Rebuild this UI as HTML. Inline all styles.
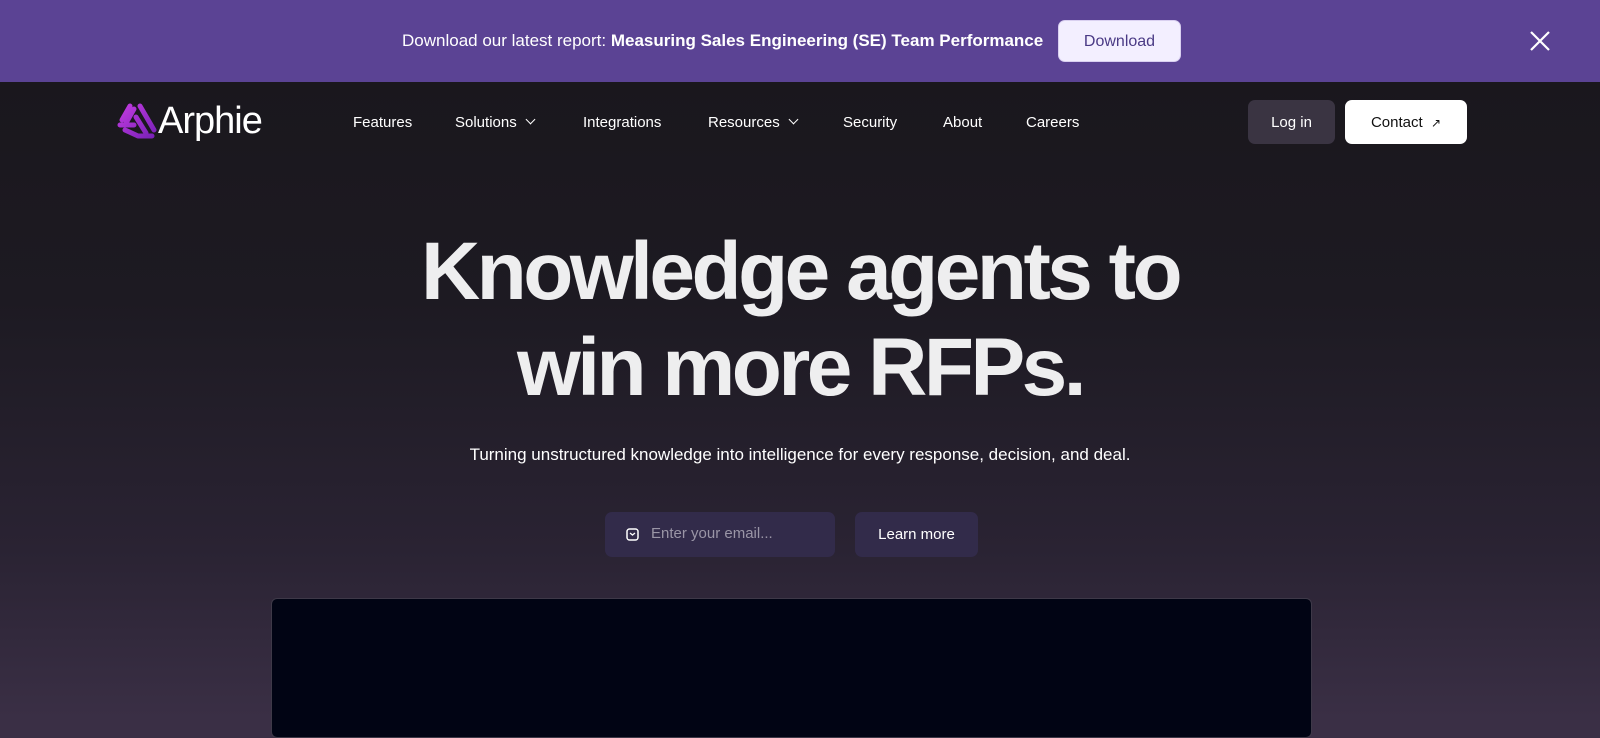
<!DOCTYPE html>
<html style="background:#3a2f45"><head><meta charset="utf-8"><style>
*{margin:0;padding:0;box-sizing:border-box}
body{width:1600px;height:718px;overflow:hidden;font-family:"Liberation Sans",sans-serif;background:linear-gradient(#1a171d 82px,#1d1a22 300px,#2a2333 550px,#3a2f45 718px);color:#fff;position:relative}
.banner{position:absolute;top:0;left:0;width:1600px;height:82px;background:#5b4394;}
.banner .t{position:absolute;left:402px;top:31px;font-size:17px;color:#fff}
.banner .btn{position:absolute;left:1058px;top:20px;width:123px;height:42px;background:#f3efff;border-radius:7px;color:#4a3a85;font-size:16px;text-align:center;line-height:42px;border:1px solid #d9d0f0}
.nav a{position:absolute;top:114px;font-size:15px;color:#fff;text-decoration:none}
.chev{display:inline-block;width:7px;height:7px;border-right:1.5px solid #fff;border-bottom:1.5px solid #fff;transform:rotate(45deg);margin-left:10px;position:relative;top:-4px}
.login{position:absolute;left:1248px;top:100px;width:87px;height:44px;background:#3a3442;border-radius:7px;text-align:center;line-height:46px;font-size:15px}
.contact{position:absolute;left:1345px;top:100px;width:122px;height:44px;background:#fff;border-radius:7px;text-align:center;line-height:46px;font-size:15px;color:#111}
h1{position:absolute;left:0;width:1600px;top:224px;text-align:center;font-size:82px;line-height:96px;font-weight:bold;letter-spacing:-3.5px;color:#eeeeef}
.sub{position:absolute;left:0;width:1600px;top:445px;text-align:center;font-size:17px;color:#fff}
.email{position:absolute;left:605px;top:512px;width:230px;height:45px;background:#322b4a;border-radius:7px}
.email span{position:absolute;left:46px;top:13px;font-size:15px;color:#9a95a6}
.learn{position:absolute;left:855px;top:512px;width:123px;height:45px;background:#322b4a;border-radius:7px;text-align:center;line-height:45px;font-size:15px}
.video{position:absolute;left:271px;top:598px;width:1041px;height:140px;background:#010414;border:1px solid #3e3948;border-radius:6px}
</style></head><body>
<div class="banner"><div class="t">Download our latest report: <b>Measuring Sales Engineering (SE) Team Performance</b></div><div class="btn">Download</div>
<svg style="position:absolute;left:1530px;top:31px" width="20" height="20"><path d="M1 1L19 19M19 1L1 19" stroke="#fff" stroke-width="2.2"/></svg></div>
<svg style="position:absolute;left:116px;top:103px" width="42" height="38" viewBox="0 0 42 38"><defs><linearGradient id="g" x1="0" y1="0" x2="1" y2="1"><stop offset="0" stop-color="#c13be0"/><stop offset="1" stop-color="#7a22b8"/></linearGradient></defs>
<path d="M14 3L6 17M4 22L18 22M9 27L22 33L36 33M24 3L38 27M18 6L10 20M20 14L30 30" stroke="url(#g)" stroke-width="5" fill="none" stroke-linecap="round" stroke-linejoin="round"/></svg>
<div style="position:absolute;left:158px;top:100px;font-size:38px;letter-spacing:-1px;color:#fff">Arphie</div>
<div class="nav"><a style="left:353px">Features</a><a style="left:455px">Solutions<i class="chev"></i></a><a style="left:583px">Integrations</a><a style="left:708px">Resources<i class="chev"></i></a><a style="left:843px">Security</a><a style="left:943px">About</a><a style="left:1026px">Careers</a></div>
<div class="login">Log in</div><div class="contact">Contact &nbsp;<span style="font-size:12px">↗</span></div>
<h1>Knowledge agents to<br>win more RFPs.</h1>
<div class="sub">Turning unstructured knowledge into intelligence for every response, decision, and deal.</div>
<div class="email"><svg style="position:absolute;left:21px;top:16px" width="13" height="13"><rect x="1" y="1" width="11" height="11" rx="2.5" fill="none" stroke="#fff" stroke-width="1.5"/><path d="M4 5L6.5 7L9 5" stroke="#fff" stroke-width="1.3" fill="none"/></svg><span>Enter your email...</span></div>
<div class="learn">Learn more</div>
<div class="video"></div>
</body></html>
